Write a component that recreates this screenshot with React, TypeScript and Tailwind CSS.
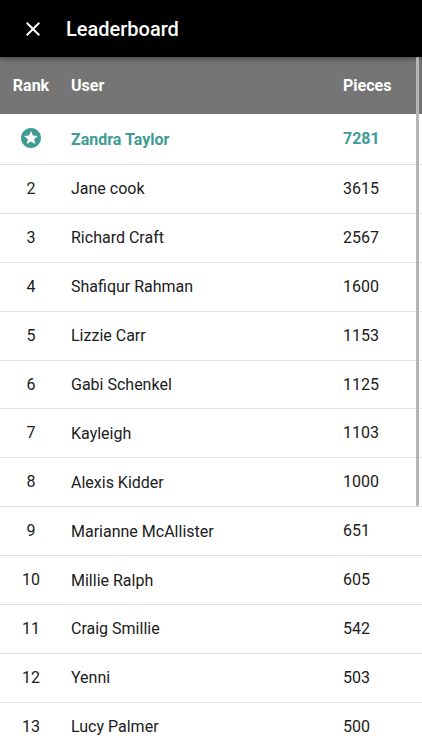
const rows: [number, string, number][] = [
  [2, 'Jane cook', 3615],
  [3, 'Richard Craft', 2567],
  [4, 'Shafiqur Rahman', 1600],
  [5, 'Lizzie Carr', 1153],
  [6, 'Gabi Schenkel', 1125],
  [7, 'Kayleigh', 1103],
  [8, 'Alexis Kidder', 1000],
  [9, 'Marianne McAllister', 651],
  [10, 'Millie Ralph', 605],
  [11, 'Craig Smillie', 542],
  [12, 'Yenni', 503],
  [13, 'Lucy Palmer', 500],
];

export default function App() {
  return (
    <div className="relative flex h-[750px] w-full flex-col overflow-hidden bg-white font-['Roboto',sans-serif] text-base text-[#202020]">
      <header className="z-10 flex h-[57px] shrink-0 items-center bg-black text-white shadow-[0_2px_5px_rgba(0,0,0,0.4)]">
        <svg className="ml-[21px] size-6" viewBox="0 0 24 24" fill="currentColor">
          <path d="M19 6.41 17.59 5 12 10.59 6.41 5 5 6.41 10.59 12 5 17.59 6.41 19 12 13.41 17.59 19 19 17.59 13.41 12z" />
        </svg>
        <h1 className="ml-[21px] text-[20px] font-medium">Leaderboard</h1>
      </header>
      <div className="grid h-[57px] shrink-0 grid-cols-[62px_1fr_79px] items-center bg-[#757575] font-bold text-white">
        <span className="text-center">Rank</span>
        <span className="pl-[9px]">User</span>
        <span>Pieces</span>
      </div>
      <div className="grid h-[51px] shrink-0 grid-cols-[62px_1fr_79px] items-center border-b border-[#e0e0e0] font-bold text-[#3e9c95]">
        <svg className="mx-auto size-6 -translate-y-px" viewBox="0 0 24 24" fill="currentColor">
          <path d="M11.99 2C6.47 2 2 6.48 2 12s4.47 10 9.99 10C17.52 22 22 17.52 22 12S17.52 2 11.99 2zm4.24 16L12 15.45 7.77 18l1.12-4.81-3.73-3.23 4.92-.42L12 5l1.92 4.53 4.92.42-3.73 3.23L16.23 18z" />
        </svg>
        <span className="pl-[9px] pt-px">Zandra Taylor</span>
        <span>7281</span>
      </div>
      {rows.map(([rank, name, pieces]) => (
        <div key={rank} className="grid h-[48.9px] shrink-0 grid-cols-[62px_1fr_79px] items-center border-b border-[#e0e0e0]">
          <span className="text-center">{rank}</span>
          <span className="pl-[9px] pt-px">{name}</span>
          <span>{pieces}</span>
        </div>
      ))}
      <div className="absolute right-[3px] top-[57px] z-20 h-[449px] w-[3px] rounded-full bg-[#b5b5b5]" />
    </div>
  );
}
